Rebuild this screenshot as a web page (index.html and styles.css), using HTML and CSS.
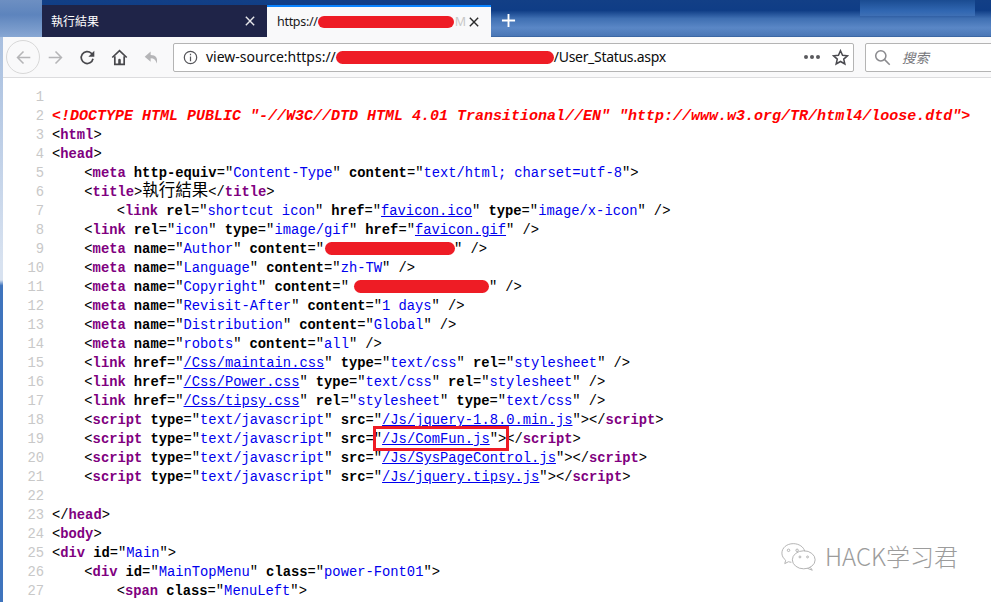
FILE: index.html
```html
<!DOCTYPE html>
<html lang="zh-Hant">
<head>
<meta charset="utf-8">
<title>執行結果</title>
<link rel="stylesheet" href="styles.css">
</head>
<body>
<div class="window">
  <div class="tabbar">
    <div class="tab tab-dark">
      <span class="tab-title-cjk">執行結果</span>
      <svg class="tab-x" viewBox="0 0 12 12"><path d="M1 1l10 10M11 1L1 11"/></svg>
    </div>
    <div class="tab tab-active">
      <span class="tab-title">https://<span class="blob blob-tab"></span><span class="fade">M</span></span>
      <svg class="tab-x" viewBox="0 0 12 12"><path d="M1 1l10 10M11 1L1 11"/></svg>
    </div>
    <svg class="plus" viewBox="0 0 16 16"><path d="M8 1v14M1 8h14"/></svg>
  </div>
  <div class="below">
    <div class="edge"></div>
    <div class="content">
      <div class="toolbar">
        <div class="btn btn-back">
          <svg viewBox="0 0 20 20" class="ico-light"><path d="M18 10H3M10 3l-7 7 7 7"/></svg>
        </div>
        <div class="btn btn-plain">
          <svg viewBox="0 0 20 20" class="ico-light"><path d="M2 10h15M10 3l7 7-7 7"/></svg>
        </div>
        <div class="btn btn-plain">
          <svg viewBox="0 0 20 20" class="ico-dark"><path d="M16.5 11.5a7 7 0 1 1-2-6.5l2.5 2"/><path class="fill" d="M18 2v7h-7z"/></svg>
        </div>
        <div class="btn btn-plain">
          <svg viewBox="0 0 20 20" class="ico-dark"><path d="M1.5 10L10 2l8.5 8"/><path d="M4.5 8.5V18h11V8.5"/><path class="fill" d="M8.5 18v-5a1.5 1.5 0 0 1 3 0v5z"/></svg>
        </div>
        <div class="btn btn-plain">
          <svg viewBox="0 0 20 20" class="ico-undo"><path d="M9 3L2 9l7 6v-4c4 0 6 2 7 6 2-6-1-10-7-10z"/></svg>
        </div>
        <div class="urlbar">
          <svg class="info" viewBox="0 0 16 16"><circle cx="8" cy="8" r="6.6"/><path d="M8 7v5M8 4v1.6"/></svg>
          <span class="url">view-source:https://<span class="blob blob-url"></span><span class="url-tail">/User_Status.aspx</span></span>
          <span class="dots"><i></i><i></i><i></i></span>
          <svg class="star" viewBox="0 0 20 20"><path d="M10 2l2.4 5.4 5.8.6-4.4 3.9 1.3 5.7L10 14.7l-5.1 2.9 1.3-5.7L1.800 8l5.800-.6z"/></svg>
        </div>
        <div class="search">
          <svg viewBox="0 0 20 20"><circle cx="8" cy="8" r="6"/><path d="M12.500 12.500L18.500 18.500"/></svg>
          <span class="search-text">搜索</span>
        </div>
      </div>
      <div class="source">
        <div class="row"><span class="num">1</span><code></code></div>
        <div class="row"><span class="num">2</span><code class="doctype">&lt;!DOCTYPE HTML PUBLIC "-//W3C//DTD HTML 4.01 Transitional//EN" "http://www.w3.org/TR/html4/loose.dtd"&gt;</code></div>
        <div class="row"><span class="num">3</span><code>&lt;<b class="t">html</b>&gt;</code></div>
        <div class="row"><span class="num">4</span><code>&lt;<b class="t">head</b>&gt;</code></div>
        <div class="row"><span class="num">5</span><code>    &lt;<b class="t">meta</b> <b>http-equiv</b>="<span class="v">Content-Type</span>" <b>content</b>="<span class="v">text/html; charset=utf-8</span>"&gt;</code></div>
        <div class="row"><span class="num">6</span><code>    &lt;<b class="t">title</b>&gt;<span class="cjk">執行結果</span>&lt;/<b class="t">title</b>&gt;</code></div>
        <div class="row"><span class="num">7</span><code>        &lt;<b class="t">link</b> <b>rel</b>="<span class="v">shortcut icon</span>" <b>href</b>="<a class="l">favicon.ico</a>" <b>type</b>="<span class="v">image/x-icon</span>" /&gt;</code></div>
        <div class="row"><span class="num">8</span><code>    &lt;<b class="t">link</b> <b>rel</b>="<span class="v">icon</span>" <b>type</b>="<span class="v">image/gif</span>" <b>href</b>="<a class="l">favicon.gif</a>" /&gt;</code></div>
        <div class="row"><span class="num">9</span><code>    &lt;<b class="t">meta</b> <b>name</b>="<span class="v">Author</span>" <b>content</b>="<span class="blob blob-author"></span>" /&gt;</code></div>
        <div class="row"><span class="num">10</span><code>    &lt;<b class="t">meta</b> <b>name</b>="<span class="v">Language</span>" <b>content</b>="<span class="v">zh-TW</span>" /&gt;</code></div>
        <div class="row"><span class="num">11</span><code>    &lt;<b class="t">meta</b> <b>name</b>="<span class="v">Copyright</span>" <b>content</b>="<span class="blob blob-copy"></span>" /&gt;</code></div>
        <div class="row"><span class="num">12</span><code>    &lt;<b class="t">meta</b> <b>name</b>="<span class="v">Revisit-After</span>" <b>content</b>="<span class="v">1 days</span>" /&gt;</code></div>
        <div class="row"><span class="num">13</span><code>    &lt;<b class="t">meta</b> <b>name</b>="<span class="v">Distribution</span>" <b>content</b>="<span class="v">Global</span>" /&gt;</code></div>
        <div class="row"><span class="num">14</span><code>    &lt;<b class="t">meta</b> <b>name</b>="<span class="v">robots</span>" <b>content</b>="<span class="v">all</span>" /&gt;</code></div>
        <div class="row"><span class="num">15</span><code>    &lt;<b class="t">link</b> <b>href</b>="<a class="l">/Css/maintain.css</a>" <b>type</b>="<span class="v">text/css</span>" <b>rel</b>="<span class="v">stylesheet</span>" /&gt;</code></div>
        <div class="row"><span class="num">16</span><code>    &lt;<b class="t">link</b> <b>href</b>="<a class="l">/Css/Power.css</a>" <b>type</b>="<span class="v">text/css</span>" <b>rel</b>="<span class="v">stylesheet</span>" /&gt;</code></div>
        <div class="row"><span class="num">17</span><code>    &lt;<b class="t">link</b> <b>href</b>="<a class="l">/Css/tipsy.css</a>" <b>rel</b>="<span class="v">stylesheet</span>" <b>type</b>="<span class="v">text/css</span>" /&gt;</code></div>
        <div class="row"><span class="num">18</span><code>    &lt;<b class="t">script</b> <b>type</b>="<span class="v">text/javascript</span>" <b>src</b>="<a class="l">/Js/jquery-1.8.0.min.js</a>"&gt;&lt;/<b class="t">script</b>&gt;</code></div>
        <div class="row"><span class="num">19</span><code>    &lt;<b class="t">script</b> <b>type</b>="<span class="v">text/javascript</span>" <b>src</b>="<a class="l">/Js/ComFun.js</a>"&gt;&lt;/<b class="t">script</b>&gt;</code></div>
        <div class="row"><span class="num">20</span><code>    &lt;<b class="t">script</b> <b>type</b>="<span class="v">text/javascript</span>" <b>src</b>="<a class="l">/Js/SysPageControl.js</a>"&gt;&lt;/<b class="t">script</b>&gt;</code></div>
        <div class="row"><span class="num">21</span><code>    &lt;<b class="t">script</b> <b>type</b>="<span class="v">text/javascript</span>" <b>src</b>="<a class="l">/Js/jquery.tipsy.js</a>"&gt;&lt;/<b class="t">script</b>&gt;</code></div>
        <div class="row"><span class="num">22</span><code></code></div>
        <div class="row"><span class="num">23</span><code>&lt;/<b class="t">head</b>&gt;</code></div>
        <div class="row"><span class="num">24</span><code>&lt;<b class="t">body</b>&gt;</code></div>
        <div class="row"><span class="num">25</span><code>&lt;<b class="t">div</b> <b>id</b>="<span class="v">Main</span>"&gt;</code></div>
        <div class="row"><span class="num">26</span><code>    &lt;<b class="t">div</b> <b>id</b>="<span class="v">MainTopMenu</span>" <b>class</b>="<span class="v">power-Font01</span>"&gt;</code></div>
        <div class="row"><span class="num">27</span><code>        &lt;<b class="t">span</b> <b>class</b>="<span class="v">MenuLeft</span>"&gt;</code></div>
        <div class="redbox"></div>
      </div>
    </div>
  </div>
  <div class="watermark">
    <svg viewBox="0 0 40 30"><path d="M14 2C7 2 2 6.500 2 12c0 3 1.500 5.500 4 7.500L5 23l4-2c1 .4 2 .5 3 .6"/><path d="M14 2c6 0 11 3.500 12 8"/><ellipse cx="25" cy="19" rx="12" ry="9.500"/><path d="M32 27l2 3-5-2"/><circle cx="9" cy="9" r="1.300"/><circle cx="18" cy="9" r="1.300"/><circle cx="21" cy="16" r="1"/><circle cx="29" cy="16" r="1"/></svg>
    <span>HACK学习君</span>
  </div>
</div>
</body>
</html>
```
FILE: styles.css
```css
* { box-sizing: border-box; }
html, body { margin: 0; padding: 0; background: #fff; }
.window {
  position: relative;
  width: 991px;
  height: 602px;
  overflow: hidden;
  display: flex;
  flex-direction: column;
}

/* Tabs */
.tabbar {
  height: 37px;
  flex: none;
  display: flex;
  align-items: flex-end;
  padding-left: 42px;
  background:
    linear-gradient(180deg, #6d8fc2 0, #5d84bd 40%, #88a7d3 100%) 0 0 / 42px 100% no-repeat,
    linear-gradient(180deg, #1a4b91 0, #3167b2 70%, #3f70b5 100%) 860px 0 / 115px 16px no-repeat,
    linear-gradient(180deg, #123f86 0, #0f3d86 28%, #3f6fb2 50%, #5a87c6 75%, #4a77b6 97%, #2f5a96 100%);
}
.tab {
  height: 32px;
  width: 225px;
  display: flex;
  align-items: center;
  justify-content: space-between;
  flex: none;
}
.tab-dark {
  background: #1f2448;
  color: #fff;
  padding: 0 12px 0 9px;
}
.tab-dark .tab-x { stroke: #e6e6ea; }
.tab-active {
  background: #f9f9fa;
  border-top: 2px solid #0a84ff;
  width: 224px;
  padding: 0 12px 0 10px;
  color: #1a1a1a;
}
.tab-x { width: 10px; height: 10px; fill: none; stroke: #2b2b2b; stroke-width: 1.7; flex: none; }
.tab-title-cjk {
  font: 12px/16px "Noto Sans CJK TC", sans-serif;
}
.tab-title {
  display: flex;
  align-items: center;
  font: 12.500px/16px "Noto Sans", sans-serif;
  letter-spacing: -0.3px;
  white-space: nowrap;
}
.fade { color: #c8c8c8; margin-left: 1px; }
.plus {
  width: 15px;
  height: 15px;
  margin: 0 0 9px 10px;
  fill: none;
  stroke: #fff;
  stroke-width: 2;
}

/* Layout beneath tabs */
.below { flex: 1; display: flex; min-height: 0; }
.edge {
  width: 3px;
  flex: none;
  background: linear-gradient(180deg, #a8bfdf 0, #d8e2f0 40%, #d8e2f0 43%, #3f74bd 44%, #3f74bd 100%);
}
.content { flex: 1; min-width: 0; display: flex; flex-direction: column; }

/* Toolbar */
.toolbar {
  height: 41px;
  flex: none;
  display: flex;
  align-items: center;
  background: #f9f9fa;
  border-bottom: 1px solid #dcdcde;
  padding-left: 3px;
}
.btn {
  display: flex;
  align-items: center;
  justify-content: center;
  flex: none;
}
.btn svg { width: 17px; height: 17px; }
.btn-back {
  width: 34px;
  height: 34px;
  border: 1px solid #d8d8d8;
  border-radius: 50%;
}
.btn-plain { width: 32px; height: 32px; }
.btn-back + .btn-plain { margin-left: -1px; }
.ico-light { fill: none; stroke: #b5b5b7; stroke-width: 1.800; }
.ico-dark { fill: none; stroke: #48484c; stroke-width: 2; }
.ico-dark .fill { fill: #48484c; stroke: none; }
.ico-undo { fill: #b5b5b7; stroke: none; }
.urlbar {
  width: 681px;
  height: 29px;
  margin-left: 6px;
  flex: none;
  display: flex;
  align-items: center;
  background: #fff;
  border: 1px solid #b4b4b4;
  border-radius: 2px;
  padding: 0 4px 0 9px;
}
.info { width: 15px; height: 15px; fill: none; stroke: #55555a; stroke-width: 1.300; flex: none; }
.url {
  display: flex;
  align-items: center;
  margin-left: 8px;
  font: 14px/20px "Noto Sans", sans-serif;
  color: #0c0c0d;
  white-space: nowrap;
}
.url-tail { letter-spacing: -0.3px; }
.dots { display: flex; gap: 2px; margin-left: auto; }
.dots i { width: 4px; height: 4px; border-radius: 50%; background: #5a5a5e; }
.star {
  width: 17px;
  height: 17px;
  margin-left: 12px;
  fill: none;
  stroke: #4a4a4f;
  stroke-width: 1.800;
}
.search {
  width: 130px;
  height: 29px;
  margin-left: 11px;
  flex: none;
  display: flex;
  align-items: center;
  background: #fff;
  border: 1px solid #b4b4b4;
  border-radius: 2px;
  padding-left: 8px;
}
.search svg { width: 17px; height: 17px; fill: none; stroke: #8a8a8e; stroke-width: 1.800; }
.search-text {
  margin-left: 11px;
  font: italic 13.500px/18px "Noto Sans CJK SC", sans-serif;
  color: #77777c;
}

/* Redactions */
.blob {
  display: inline-block;
  background: #ee1c25;
  border-radius: 9px;
  flex: none;
}
.blob-tab { width: 136px; height: 12px; }
.blob-url { width: 218px; height: 13px; }
.blob-author { width: 130px; height: 13px; vertical-align: -2px; margin-left: 1px; margin-right: -1px; }
.blob-copy { width: 135px; height: 13px; vertical-align: -2px; margin-left: 5px; margin-right: 0; }

/* Source */
.source {
  position: relative;
  flex: 1;
  min-height: 0;
  padding-top: 10px;
  background: #fff;
  font: 13.800px/19px "Liberation Mono", "Noto Sans CJK TC", monospace;
  color: #000;
}
.row { display: flex; height: 19px; }
.num {
  width: 41px;
  flex: none;
  text-align: right;
  color: #c8c8c8;
}
code {
  margin-left: 8px;
  font: inherit;
  white-space: pre;
  word-spacing: -0.2px;
}
.t { color: #800080; font-weight: 700; }
.v { color: #0000ee; }
.l { color: #0000ee; text-decoration: underline; }
.cjk { font: 16.500px/0 "Noto Sans CJK TC", sans-serif; }
.doctype {
  color: #f00;
  font-weight: 700;
  font-style: italic;
  font-size: 15px;
  word-spacing: 0;
}
.redbox {
  position: absolute;
  left: 370px;
  top: 348px;
  width: 136px;
  height: 25px;
  border: 3px solid #ee1c25;
}

/* Watermark */
.watermark {
  position: absolute;
  left: 780px;
  top: 541px;
  display: flex;
  align-items: center;
  gap: 7px;
}
.watermark svg { width: 38px; height: 30px; fill: none; stroke: #b0b0b0; stroke-width: 1; }
.watermark span {
  font: 300 24px/30px "Noto Sans CJK SC", sans-serif;
  color: #9c9c9c;
  text-shadow: 1px 1px 0 #fff;
}
```
